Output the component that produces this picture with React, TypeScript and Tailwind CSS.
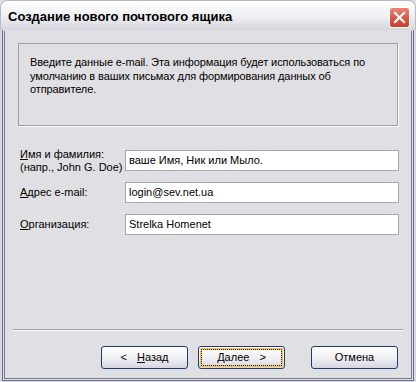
import React from "react";

const F = { fontFamily: '"Liberation Sans", Arial, sans-serif' };

function Btn({ children, def }: { children: React.ReactNode; def?: boolean }) {
  return (
    <div className="shrink-0 w-[87px] h-[23px] rounded-[3px] border border-[#1f3d6b] bg-gradient-to-b from-[#ffffff] via-[#f1f1f5] to-[#d6d5e0] p-[1px]">
      <div
        className={
          "w-full h-full rounded-[2px] flex items-center justify-center text-[11px] text-black " +
          (def ? "border-2 border-[#f6c35a]" : "")
        }
      >
        <div className={"flex items-center justify-center px-[2px] " + (def ? "outline outline-1 outline-dotted outline-[#222] w-[79px] h-[15px]" : "")}>
          {children}
        </div>
      </div>
    </div>
  );
}

export default function App() {
  return (
    <div className="w-[416px] h-[382px] bg-[#e0dfe3] overflow-hidden" style={F}>
      <div className="w-[416px] h-[382px] flex flex-col">
        {/* Title bar */}
        <div className="h-[30px] rounded-t-[7px] border border-b-0 border-[#b8b8c8] bg-gradient-to-b from-[#ffffff] via-[#f0f0f4] to-[#d6d6de] flex items-center pl-[7px] pr-[4px]">
          <div className="flex-1 font-bold text-black pt-[3px]" style={{ fontFamily: '"Liberation Sans", Arial, sans-serif', fontSize: "13px" }}>
            Создание нового почтового ящика
          </div>
          <div className="w-[21px] h-[21px] rounded-[3px] border border-white bg-gradient-to-b from-[#e58873] via-[#d85a46] to-[#c8402c] flex items-center justify-center mr-[1px] mt-[3px]">
            <svg width="13" height="13" viewBox="0 0 13 13">
              <path d="M2 2 L11 11 M11 2 L2 11" stroke="white" strokeWidth="2.2" strokeLinecap="square" />
            </svg>
          </div>
        </div>
        {/* Body frame */}
        <div className="flex-1 px-[2px] pb-[1px] bg-[#d8d8e0] flex flex-col">
          <div className="flex-1 border-x border-b border-[#6f6f8f] p-[1px] bg-[#e0dfe3] flex flex-col">
            <div className="flex-1 border-x border-b border-[#7b7b97] bg-[#e0dfe3] flex flex-col">
              {/* Info box */}
              <div className="mt-[12px] mx-[13px] h-[83px] border border-[#a0a0a4] shadow-[1px_1px_0_#ffffff] pl-[11px] pr-[8px] pt-[12px] text-[11px] leading-[13.5px] tracking-[-0.1px] text-black">
                Введите данные e-mail. Эта информация будет использоваться по умолчанию в ваших письмах для формирования данных об отправителе.
              </div>
              {/* Fields */}
              <div className="mt-[24px] flex flex-col gap-[11px] pl-[15px] pr-[12px]">
                <div className="flex items-center h-[21px]">
                  <div className="w-[105px] text-[11px] leading-[13px] text-black mt-[1px]">
                    <div><span className="underline">И</span>мя и фамилия:</div>
                    <div>(напр., John G. Doe)</div>
                  </div>
                  <div className="flex-1 h-[21px] bg-white border border-[#a5a9ae] flex items-center px-[3px] text-[11px] text-black">
                    ваше Имя, Ник или Мыло.
                  </div>
                </div>
                <div className="flex items-center h-[21px]">
                  <div className="w-[105px] text-[11px] text-black">
                    <span className="underline">А</span>дрес e-mail:
                  </div>
                  <div className="flex-1 h-[21px] bg-white border border-[#a5a9ae] flex items-center px-[3px] text-[11px] text-black">
                    login@sev.net.ua
                  </div>
                </div>
                <div className="flex items-center h-[21px]">
                  <div className="w-[105px] text-[11px] text-black">
                    <span className="underline">О</span>рганизация:
                  </div>
                  <div className="flex-1 h-[21px] bg-white border border-[#a5a9ae] flex items-center px-[3px] text-[11px] text-black">
                    Strelka Homenet
                  </div>
                </div>
              </div>
              <div className="flex-1" />
              {/* Separator */}
              <div className="mx-[8px] h-[2px] border-t border-[#a0a0a4] border-b border-b-white" />
              {/* Buttons */}
              <div className="flex justify-end pr-[13px] pt-[15px] pb-[9px]">
                <Btn>
                  <span className="mr-[10px]">&lt;</span>
                  <span><span className="underline">Н</span>азад</span>
                </Btn>
                <div className="w-[10px] shrink-0" />
                <Btn def>
                  <span><span className="underline">Д</span>алее</span>
                  <span className="ml-[10px]">&gt;</span>
                </Btn>
                <div className="w-[26px] shrink-0" />
                <Btn>Отмена</Btn>
              </div>
            </div>
          </div>
        </div>
      </div>
    </div>
  );
}
